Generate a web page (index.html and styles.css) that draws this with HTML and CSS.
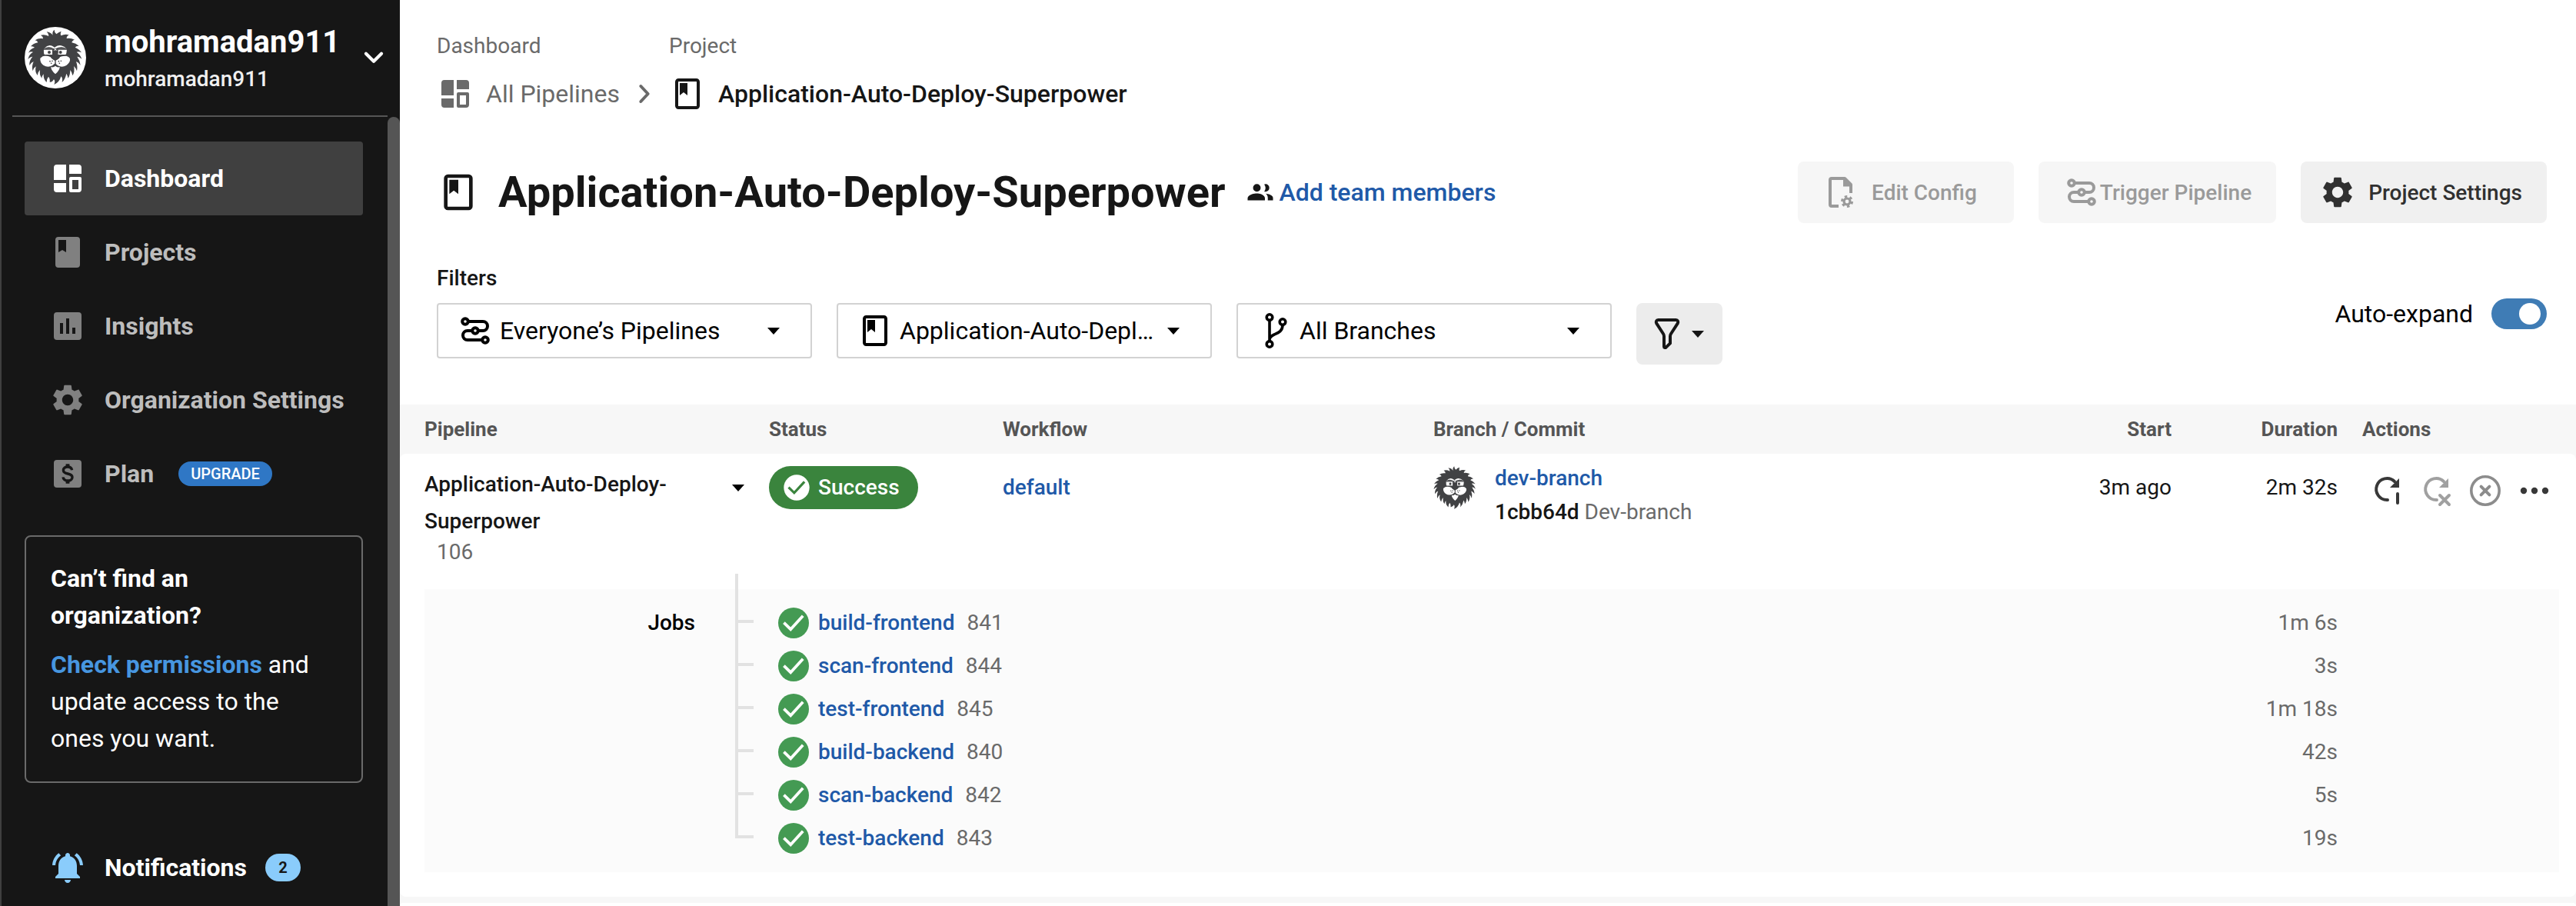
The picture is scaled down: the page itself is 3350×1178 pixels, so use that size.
FILE: index.html
```html
<!DOCTYPE html>
<html lang="en">
<head>
<meta charset="utf-8">
<title>Application-Auto-Deploy-Superpower - Pipelines</title>
<link rel="stylesheet" href="styles.css">
</head>
<body>
<svg class="sprite" aria-hidden="true">
  <symbol id="i-dashboard" viewBox="0 0 24 24"><path fill="currentColor" fill-rule="evenodd" d="M5 3h6v10H3V5a2 2 0 0 1 2-2zM13 3h6a2 2 0 0 1 2 2v4h-8zM3 15h8v6H5a2 2 0 0 1-2-2zM14 11h6a1 1 0 0 1 1 1v7a2 2 0 0 1-2 2h-5a1 1 0 0 1-1-1v-8a1 1 0 0 1 1-1zm1 2v6h4v-6z"/></symbol>
  <symbol id="i-book-solid" viewBox="0 0 24 24"><path fill="currentColor" d="M18 2H6a2 2 0 0 0-2 2v16a2 2 0 0 0 2 2h12a2 2 0 0 0 2-2V4a2 2 0 0 0-2-2zM6 4h5v8l-2.500-1.500L6 12z"/></symbol>
  <symbol id="i-book" viewBox="0 0 24 24"><rect x="5" y="3" width="14" height="18" rx="1.200" fill="none" stroke="currentColor" stroke-width="2"/><path fill="currentColor" d="M7 5h5v8l-2.500-2L7 13z"/></symbol>
  <symbol id="i-chart" viewBox="0 0 24 24"><path fill="currentColor" d="M19 3H5a2 2 0 0 0-2 2v14a2 2 0 0 0 2 2h14a2 2 0 0 0 2-2V5a2 2 0 0 0-2-2zM9 17H7v-7h2zm4 0h-2V7h2zm4 0h-2v-4h2z"/></symbol>
  <symbol id="i-gear" viewBox="0 0 24 24"><path fill="currentColor" d="M19.140 12.940c.04-.3.06-.61.06-.94 0-.32-.02-.64-.07-.94l2.030-1.580c.18-.14.23-.41.12-.61l-1.920-3.320c-.12-.22-.37-.29-.59-.22l-2.390.96c-.5-.38-1.030-.7-1.620-.94l-.36-2.540c-.04-.24-.24-.41-.48-.41h-3.840c-.24 0-.43.17-.47.41l-.36 2.540c-.59.24-1.130.57-1.620.94l-2.390-.96c-.22-.08-.47 0-.59.22L2.740 8.870c-.12.21-.08.47.12.61l2.030 1.580c-.05.3-.09.63-.09.94s.02.64.07.94l-2.030 1.580c-.18.14-.23.41-.12.61l1.920 3.320c.12.22.37.29.59.22l2.390-.96c.5.38 1.030.7 1.620.94l.36 2.540c.05.24.24.41.48.41h3.840c.24 0 .44-.17.47-.41l.36-2.540c.59-.24 1.130-.56 1.620-.94l2.390.96c.22.08.47 0 .59-.22l1.920-3.320c.12-.22.07-.47-.12-.61zM12 15.600c-1.980 0-3.600-1.620-3.600-3.600s1.620-3.600 3.600-3.600 3.600 1.620 3.600 3.600-1.620 3.600-3.600 3.600z"/></symbol>
  <symbol id="i-plan" viewBox="0 0 24 24"><path fill="currentColor" d="M19 3H5a2 2 0 0 0-2 2v14a2 2 0 0 0 2 2h14a2 2 0 0 0 2-2V5a2 2 0 0 0-2-2z"/><path fill="none" stroke="#161616" stroke-width="1.700" d="M14.800 9.600c-.2-1.300-1.300-2.100-2.800-2.100-1.600 0-2.800.8-2.800 2.200 0 3.200 5.800 1.400 5.800 4.500 0 1.500-1.300 2.300-2.900 2.300s-2.900-.8-3.100-2.300"/><path fill="#161616" d="M10.800 5.600h2.400v2.200h-2.400zM10.800 16.200h2.400v2.200h-2.400z"/></symbol>
  <symbol id="i-bell" viewBox="0 0 24 24"><path fill="currentColor" d="M7.580 4.080L6.150 2.650C3.750 4.480 2.170 7.300 2.030 10.500h2c.15-2.650 1.510-4.970 3.550-6.420zm12.390 6.420h2c-.15-3.200-1.730-6.020-4.120-7.850l-1.420 1.430c2.020 1.450 3.390 3.770 3.540 6.420zM18 11c0-3.070-1.640-5.640-4.500-6.320V4c0-.83-.67-1.500-1.500-1.500s-1.500.67-1.500 1.500v.68C7.630 5.360 6 7.920 6 11v5l-2 2v1h16v-1l-2-2zm-6 11c1.100 0 2-.9 2-2h-4c0 1.100.9 2 2 2z"/></symbol>
  <symbol id="i-down" viewBox="0 0 24 24"><path fill="none" stroke="currentColor" stroke-width="2.800" stroke-linecap="round" stroke-linejoin="round" d="M5.300 8.500l6.700 6.700 6.700-6.700"/></symbol>
  <symbol id="i-right" viewBox="0 0 24 24"><path fill="none" stroke="currentColor" stroke-width="3" stroke-linejoin="round" stroke-linecap="round" d="M8.500 4.500L15.500 12l-7 7.500"/></symbol>
  <symbol id="i-people" viewBox="0 0 24 24"><path fill="currentColor" d="M16.500 11.500a3.300 3.300 0 1 0 0-6.600 3.300 3.300 0 0 0-1.100.2 5.300 5.300 0 0 1 0 6.200c.3.100.7.200 1.100.2zM9 11.500a3.300 3.300 0 1 0 0-6.600 3.300 3.300 0 0 0 0 6.600zM9 13c-2.700 0-8 1.300-8 4.200V19h15v-1.800C16 14.300 11.700 13 9 13zM16.700 13.100c1 .8 1.800 2 1.800 3.900v2H23v-2c0-2.400-3.500-3.600-6.300-3.900z"/></symbol>
  <symbol id="i-pipeline" viewBox="0 0 24 24"><g fill="none" stroke="currentColor" stroke-width="2"><path d="M7.500 6H17a3 3 0 0 1 0 6h-2.500M9.500 12H7a3 3 0 0 0 0 6h9.500"/><circle cx="5.500" cy="6" r="1.900"/><circle cx="12" cy="12" r="1.900"/><circle cx="18.500" cy="18" r="1.900"/></g></symbol>
  <symbol id="i-branch" viewBox="0 0 24 24"><g fill="none" stroke="currentColor" stroke-width="1.800"><circle cx="8.500" cy="3.300" r="1.900"/><circle cx="8.500" cy="20.700" r="1.900"/><circle cx="17" cy="6.300" r="1.900"/><path d="M8.500 5.200v13.600M17 8.200c0 4-2.500 5-5.500 6.300-1.800.8-3 1.500-3 3.500"/></g></symbol>
  <symbol id="i-funnel" viewBox="0 0 24 24"><path fill="none" stroke="currentColor" stroke-width="2" stroke-linejoin="round" d="M6.200 3h11.600c1.200 0 1.600 1.200 1.100 2.200L14.500 12c-.4.6-.5 1-.5 1.700v4.500l-2.700 2.600c-.6.5-1.300.2-1.300-.6v-6.500c0-.7-.1-1.100-.5-1.700L5.100 5.200C4.600 4.200 5 3 6.200 3z"/></symbol>
  <symbol id="i-config" viewBox="0 0 24 24"><path fill="none" stroke="currentColor" stroke-width="2" stroke-linejoin="round" d="M10.500 21H6a1 1 0 0 1-1-1V4a1 1 0 0 1 1-1h8.500L18.500 7v5.500"/><path fill="currentColor" d="M13.500 3v5.200h5.500L15 3z"/><circle cx="16" cy="18" r="2" fill="none" stroke="currentColor" stroke-width="1.600"/><circle cx="16" cy="18" r="3.300" fill="none" stroke="currentColor" stroke-width="1.400" stroke-dasharray="1.730 1.730"/></symbol>
  <symbol id="i-check-circle" viewBox="0 0 24 24"><circle cx="12" cy="12" r="10" fill="currentColor"/><path fill="none" stroke="var(--tick)" stroke-width="1.900" d="M5.700 11.800l4.400 4.300 8-8.700"/></symbol>
  <symbol id="i-rerun" viewBox="0 0 24 24"><path fill="none" stroke="currentColor" stroke-width="2" stroke-linecap="round" d="M17 6a7 7 0 1 0-4.500 12M19 14v6"/><path fill="currentColor" d="M20 4v6h-6z"/></symbol>
  <symbol id="i-rerun-failed" viewBox="0 0 24 24"><path fill="none" stroke="currentColor" stroke-width="2" stroke-linecap="round" d="M17 6a7 7 0 1 0-4.500 12M14.500 15l6 6M20.500 15l-6 6"/><path fill="currentColor" d="M20 4v6h-6z"/></symbol>
  <symbol id="i-cancel" viewBox="0 0 24 24"><circle cx="12" cy="12" r="9.100" fill="none" stroke="currentColor" stroke-width="1.800"/><path fill="none" stroke="currentColor" stroke-width="2" stroke-linecap="round" d="M9.300 9.300l5.400 5.400M14.700 9.300l-5.400 5.400"/></symbol>
  <symbol id="i-more" viewBox="0 0 24 24"><g fill="currentColor"><circle cx="5" cy="12" r="2.100"/><circle cx="12" cy="12" r="2.100"/><circle cx="19" cy="12" r="2.100"/></g></symbol>
  <symbol id="i-caret" viewBox="0 0 16 9"><path fill="currentColor" d="M0 0h16L8 9z"/></symbol>
  <g id="lion">
    <path fill="#414244" d="M128 50Q124 38 134 29Q134 40 142 46Q150 38 161 35Q156 46 160 52Q175 44 191 49Q181 55 182 63Q198 60 213 68Q203 71 202 79Q218 81 230 92Q219 91 215 98Q231 104 240 118Q228 112 221 116Q235 126 241 143Q230 133 223 134Q234 149 236 167Q227 155 219 153Q226 172 222 190Q217 177 210 171Q215 192 205 208Q203 194 196 186Q196 208 187 218Q186 208 181 200Q177 222 164 234Q168 218 160 211Q154 234 133 243Q139 230 132 222Q127 234 116 233Q118 220 111 212Q103 222 104 234Q90 222 92 202Q86 208 85 218Q75 206 78 186Q70 193 68 207Q57 193 62 172Q54 177 50 190Q44 173 53 153Q44 156 37 168Q35 149 49 134Q39 134 31 145Q34 126 51 116Q42 113 33 119Q39 104 57 98Q51 92 42 94Q52 82 70 79Q68 72 59 70Q72 61 90 64Q90 55 81 50Q97 46 112 54Q111 43 104 37Q120 39 128 50Z"/>
    <g fill="#fff"><path d="M95 101Q113 82 132 96L135 99L138 96Q157 82 180 101Q160 91 138 103H132Q114 91 95 101Z"/><rect x="92" y="103" width="37" height="25" rx="4"/><rect x="146" y="103" width="37" height="25" rx="4"/><path d="M79 140Q92 126 110 132Q121 134 128 143L136 150L146 143Q156 132 170 132Q188 129 195 142Q197 156 181 168Q164 178 148 169L137 160L126 169Q108 178 91 167Q77 156 79 140Z"/><path d="M121 174Q129 178 138 170Q146 178 155 174Q156 186 138 202Q120 186 121 174Z"/><path d="M130 111h15l-7-8z"/></g>
    <path fill="none" stroke="#414244" stroke-width="4" d="M90 105h38v23H97q-5 0-6-8zM147 105h38l-2 15q-1 8-6 8h-30z"/>
    <g fill="#414244"><circle cx="114" cy="117" r="6"/><circle cx="158" cy="117" r="6"/><path d="M128 112q10-6 20 0v8q-10-5-20 0zM119 134h37q-2 9-18 15-16-6-19-15z"/><circle cx="117" cy="152" r="2.500"/><circle cx="126" cy="151" r="2.500"/><circle cx="122" cy="160" r="2.500"/><circle cx="151" cy="152" r="2.500"/><circle cx="160" cy="151" r="2.500"/><circle cx="154" cy="160" r="2.500"/><path d="M136 146h4v20h-4z"/></g>
  </g>
</svg>
<div class="app">
  <aside class="sidebar">
    <button class="org" type="button">
      <span class="org-avatar"><svg viewBox="18 18 240 240"><use href="#lion"/></svg></span>
      <span class="org-names"><span class="org-name">mohramadan911</span><span class="org-sub">mohramadan911</span></span>
      <svg class="icon-36"><use href="#i-down"/></svg>
    </button>
    <div class="sidebar-body">
      <div class="sidebar-content">
        <nav class="nav">
          <a class="nav-item active" href="#dashboard"><svg class="icon"><use href="#i-dashboard"/></svg>Dashboard</a>
          <a class="nav-item" href="#projects"><svg class="icon"><use href="#i-book-solid"/></svg>Projects</a>
          <a class="nav-item" href="#insights"><svg class="icon"><use href="#i-chart"/></svg>Insights</a>
          <a class="nav-item" href="#settings"><svg class="icon"><use href="#i-gear"/></svg>Organization Settings</a>
          <a class="nav-item" href="#plan"><svg class="icon"><use href="#i-plan"/></svg>Plan<span class="upgrade">UPGRADE</span></a>
        </nav>
        <section class="org-help">
          <h2>Can’t find an organization?</h2>
          <p><a href="#permissions">Check permissions</a> and update access to the ones you want.</p>
        </section>
        <a class="nav-item notifications" href="#notifications"><svg class="icon"><use href="#i-bell"/></svg>Notifications<span class="count">2</span></a>
      </div>
      <div class="scroll-thumb"></div>
    </div>
  </aside>
  <main class="main">
    <header class="top">
      <ol class="crumbs">
        <li class="crumb"><span class="crumb-label">Dashboard</span><a class="crumb-link" href="#all"><svg class="icon"><use href="#i-dashboard"/></svg>All Pipelines</a></li>
        <li class="crumb-sep"><svg><use href="#i-right"/></svg></li>
        <li class="crumb"><span class="crumb-label">Project</span><a class="crumb-link current" href="#project"><svg class="icon"><use href="#i-book"/></svg>Application-Auto-Deploy-Superpower</a></li>
      </ol>
      <div class="title-row">
        <svg class="title-icon"><use href="#i-book"/></svg>
        <h1>Application-Auto-Deploy-Superpower</h1>
        <a class="team-link" href="#team"><svg class="icon-36"><use href="#i-people"/></svg>Add team members</a>
        <div class="title-actions">
          <button class="btn btn-config" type="button" disabled><svg class="icon"><use href="#i-config"/></svg>Edit Config</button>
          <button class="btn btn-trigger" type="button" disabled><svg class="icon"><use href="#i-pipeline"/></svg>Trigger Pipeline</button>
          <button class="btn btn-settings" type="button"><svg class="icon"><use href="#i-gear"/></svg>Project Settings</button>
        </div>
      </div>
      <div class="filters">
        <div class="filter-group">
          <span class="filters-label">Filters</span>
          <div class="filter-row">
            <label class="picker"><svg class="icon"><use href="#i-pipeline"/></svg><select aria-label="Pipelines"><option>Everyone’s Pipelines</option></select><svg class="caret"><use href="#i-caret"/></svg></label>
            <label class="picker"><svg class="icon"><use href="#i-book"/></svg><select aria-label="Project"><option>Application-Auto-Deploy-Superpower</option></select><svg class="caret"><use href="#i-caret"/></svg></label>
            <label class="picker"><svg class="icon"><use href="#i-branch"/></svg><select aria-label="Branch"><option>All Branches</option></select><svg class="caret"><use href="#i-caret"/></svg></label>
            <button class="filter-btn" type="button" aria-label="Status filter"><svg class="icon"><use href="#i-funnel"/></svg><svg class="caret"><use href="#i-caret"/></svg></button>
          </div>
        </div>
        <label class="auto-expand">Auto-expand<input type="checkbox" class="toggle" checked></label>
      </div>
    </header>
    <section class="pipelines">
      <table class="runs">
        <colgroup><col class="c-pipeline"><col class="c-status"><col class="c-workflow"><col><col class="c-start"><col class="c-duration"><col class="c-actions"></colgroup>
        <thead>
          <tr><th class="first">Pipeline</th><th>Status</th><th>Workflow</th><th>Branch / Commit</th><th class="num">Start</th><th class="num">Duration</th><th class="last">Actions</th></tr>
        </thead>
        <tbody>
          <tr class="run">
            <td class="first">
              <div class="run-name">
                <div><a href="#project">Application-Auto-Deploy-Superpower</a><span class="run-number">106</span></div>
                <button class="plain expander" type="button" aria-label="Collapse"><svg class="caret"><use href="#i-caret"/></svg></button>
              </div>
            </td>
            <td><span class="status"><svg><use href="#i-check-circle"/></svg>Success</span></td>
            <td><a class="link" href="#default">default</a></td>
            <td>
              <div class="commit">
                <svg class="commit-avatar" viewBox="29 28 216 216"><use href="#lion"/></svg>
                <div class="commit-lines"><a class="link" href="#dev-branch">dev-branch</a><span><a class="hash" href="#1cbb64d">1cbb64d</a> <span class="muted">Dev-branch</span></span></div>
              </div>
            </td>
            <td class="num">3m ago</td>
            <td class="num">2m 32s</td>
            <td class="last">
              <div class="actions">
                <button class="plain" type="button" aria-label="Rerun"><svg class="icon"><use href="#i-rerun"/></svg></button>
                <button class="plain off" type="button" aria-label="Rerun from failed"><svg class="icon"><use href="#i-rerun-failed"/></svg></button>
                <button class="plain cancel" type="button" aria-label="Cancel"><svg class="icon"><use href="#i-cancel"/></svg></button>
                <button class="plain" type="button" aria-label="More"><svg class="icon"><use href="#i-more"/></svg></button>
              </div>
            </td>
          </tr>
          <tr class="jobs-row">
            <td colspan="7">
              <div class="jobs">
                <span class="jobs-label">Jobs</span>
                <ul class="job-list">
                  <li><svg class="icon"><use href="#i-check-circle"/></svg><a class="link" href="#841">build-frontend</a><span>841</span><span class="time">1m 6s</span></li>
                  <li><svg class="icon"><use href="#i-check-circle"/></svg><a class="link" href="#844">scan-frontend</a><span>844</span><span class="time">3s</span></li>
                  <li><svg class="icon"><use href="#i-check-circle"/></svg><a class="link" href="#845">test-frontend</a><span>845</span><span class="time">1m 18s</span></li>
                  <li><svg class="icon"><use href="#i-check-circle"/></svg><a class="link" href="#840">build-backend</a><span>840</span><span class="time">42s</span></li>
                  <li><svg class="icon"><use href="#i-check-circle"/></svg><a class="link" href="#842">scan-backend</a><span>842</span><span class="time">5s</span></li>
                  <li><svg class="icon"><use href="#i-check-circle"/></svg><a class="link" href="#843">test-backend</a><span>843</span><span class="time">19s</span></li>
                </ul>
              </div>
            </td>
          </tr>
        </tbody>
      </table>
      <div class="next-run"></div>
    </section>
  </main>
</div>
</body>
</html>
```
FILE: styles.css
```css
*, *::before, *::after { box-sizing: border-box; }

body {
  margin: 0;
  font-family: Roboto, "Liberation Sans", sans-serif;
  font-size: 28px;
  color: #161616;
  background: #fff;
}

a { color: inherit; text-decoration: none; }
button, select { font: inherit; color: inherit; }
h1, h2, p, ol, ul { margin: 0; padding: 0; }
ol, ul { list-style: none; }
svg { display: block; flex: none; }

.sprite { position: absolute; width: 0; height: 0; }
.icon { width: 48px; height: 48px; }
.icon-36 { width: 36px; height: 36px; }
.caret { width: 16px; height: 9px; }
.link { color: #2059a8; font-weight: 500; }
.muted { color: #6a6a6a; }
.plain { display: block; padding: 0; border: 0; background: none; cursor: pointer; }

.app { display: flex; height: 100vh; overflow: hidden; }

/* Sidebar */
.sidebar {
  display: flex;
  flex-direction: column;
  flex: none;
  width: 520px;
  border-left: 2px solid #404040;
  background: #161616;
  color: #fff;
}
.org {
  display: flex;
  align-items: center;
  flex: none;
  height: 152px;
  margin: 0 16px 0 14px;
  padding: 0 0 0 16px;
  border: 0;
  border-bottom: 2px solid #555;
  background: none;
  text-align: left;
}
.org-avatar { width: 80px; height: 80px; border-radius: 50%; background: #fff; overflow: hidden; }
.org-avatar svg { width: 80px; height: 80px; }
.org-names { display: flex; flex-direction: column; flex: 1; gap: 4px; margin-left: 24px; padding-top: 4px; }
.org-name { font-size: 40px; line-height: 48px; font-weight: 700; }
.org-sub { font-size: 28px; line-height: 40px; font-weight: 500; color: #f0f0f0; }

.sidebar-body { display: flex; flex: 1; min-height: 0; }
.sidebar-content { flex: 1; padding: 32px 32px 0 30px; }
.scroll-thumb { width: 16px; border-radius: 8px 8px 0 0; background: #555; }

.nav-item {
  display: flex;
  align-items: center;
  gap: 24px;
  height: 96px;
  padding-left: 32px;
  border-radius: 4px;
  font-size: 32px;
  font-weight: 700;
  white-space: nowrap;
  color: #bdbdbd;
}
.nav-item .icon { color: #808080; }
.nav-item.active { background: #404040; color: #fff; }
.nav-item.active .icon { color: #fff; }
.upgrade {
  margin-left: 8px;
  padding: 0 16px;
  border-radius: 16px;
  background: #2f77c5;
  color: #fff;
  font-size: 20px;
  line-height: 32px;
  font-weight: 500;
}
.org-help {
  margin: 32px 0 62px;
  padding: 30px 32px 32px;
  border: 2px solid #6a6a6a;
  border-radius: 8px;
  font-size: 32px;
  line-height: 48px;
}
.org-help h2 { margin-bottom: 16px; font-size: 32px; line-height: 48px; font-weight: 700; }
.org-help a { color: #4796e0; font-weight: 700; }
.notifications { color: #fff; }
.notifications .icon { color: #8accfb; }
.count {
  width: 46px;
  border-radius: 18px;
  background: #8accfb;
  color: #161616;
  font-size: 20px;
  line-height: 36px;
  text-align: center;
}

/* Page header */
.main { display: flex; flex-direction: column; flex: 1; min-width: 0; }
.top { flex: none; padding: 40px 38px 52px 48px; }
.crumbs { display: flex; align-items: flex-end; gap: 16px; }
.crumb-label { display: block; margin-bottom: 18px; line-height: 40px; color: #6a6a6a; }
.crumb-link { display: flex; align-items: center; gap: 16px; font-size: 32px; color: #6a6a6a; }
.crumb-link.current { font-weight: 500; color: #161616; }
.crumb-sep { padding: 8px 0; color: #6a6a6a; }
.crumb-sep svg { width: 32px; height: 32px; }

.title-row { display: flex; align-items: center; margin-top: 64px; }
.title-icon { width: 56px; height: 56px; margin-right: 24px; }
h1 { font-size: 56px; line-height: 80px; font-weight: 700; white-space: nowrap; }
.team-link {
  display: flex;
  align-items: center;
  gap: 6px;
  margin-left: 28px;
  font-size: 32px;
  font-weight: 500;
  color: #2059a8;
}
.team-link svg { color: #161616; }
.title-actions { display: flex; gap: 32px; margin-left: auto; }
.btn {
  display: flex;
  align-items: center;
  gap: 16px;
  height: 80px;
  padding: 0 32px;
  border: 0;
  border-radius: 8px;
  background: #f0f0f0;
  font-weight: 500;
  color: #303030;
}
.btn:disabled { background: #f6f6f6; color: #9a9a9a; }
.btn-config { padding-right: 48px; }
.btn-trigger { gap: 0; }
.btn-settings { padding-left: 24px; }

.filters { display: flex; align-items: center; justify-content: space-between; margin-top: 52px; }
.filters-label { display: block; margin-bottom: 12px; line-height: 40px; font-weight: 500; }
.filter-row { display: flex; align-items: flex-start; gap: 32px; }
.picker {
  display: flex;
  align-items: center;
  gap: 8px;
  width: 488px;
  height: 72px;
  padding: 0 40px 0 24px;
  border: 2px solid #d2d2d2;
  border-radius: 4px;
  font-size: 32px;
  color: #000;
}
.picker select {
  flex: 1;
  min-width: 0;
  height: 48px;
  margin-right: 8px;
  padding: 0;
  border: 0;
  background: none;
  appearance: none;
  text-overflow: ellipsis;
}
.filter-btn {
  display: flex;
  align-items: center;
  gap: 8px;
  width: 112px;
  height: 80px;
  padding: 0 16px;
  border: 0;
  border-radius: 8px;
  background: #ececec;
}
.auto-expand { display: flex; align-items: center; gap: 24px; font-size: 32px; color: #000; }
.toggle {
  width: 72px;
  height: 40px;
  margin: 0;
  padding: 6px 8px;
  border-radius: 20px;
  background: #3f7cb5;
  appearance: none;
}
.toggle::before {
  content: "";
  display: block;
  width: 28px;
  height: 28px;
  margin-left: auto;
  border-radius: 50%;
  background: #fff;
}

/* Pipeline runs */
.pipelines { display: flex; flex-direction: column; flex: 1; gap: 8px; min-height: 0; background: #f7f7f7; }
.runs { width: 100%; border-spacing: 0; table-layout: fixed; }
.c-pipeline { width: 480px; }
.c-status { width: 304px; }
.c-workflow { width: 560px; }
.c-start { width: 280px; }
.c-duration { width: 216px; }
.c-actions { width: 310px; }
.runs th {
  height: 64px;
  padding: 0;
  font-size: 26px;
  font-weight: 700;
  text-align: left;
  color: #555;
}
.runs td { padding: 0; background: #fff; }
.runs .num { text-align: right; }
.runs .first, .runs .last { padding-left: 32px; }
.run td { padding-top: 16px; padding-bottom: 32px; line-height: 56px; vertical-align: top; }
.run td:first-child { border-top-left-radius: 8px; }
.run td:last-child { border-top-right-radius: 8px; }
.run-name { display: flex; justify-content: space-between; padding-right: 32px; line-height: 48px; font-weight: 500; }
.run-name > div { width: 344px; }
.run-number { display: block; padding-left: 16px; line-height: 32px; font-weight: 400; color: #6a6a6a; }
.expander { height: 56px; color: #000; }
.status {
  --tick: #3a843d;
  display: inline-flex;
  align-items: center;
  gap: 8px;
  height: 56px;
  padding: 0 24px 0 16px;
  border-radius: 28px;
  background: #3a843d;
  color: #fff;
  font-weight: 500;
  vertical-align: top;
}
.status svg { width: 40px; height: 40px; }
.commit { display: flex; gap: 24px; }
.commit-avatar { width: 56px; height: 56px; }
.commit-lines { display: flex; flex-direction: column; gap: 12px; line-height: 32px; }
.hash { font-weight: 500; }
.actions { display: flex; gap: 16px; padding: 8px 0 0 8px; color: #383838; }
.actions .off { color: #a0a0a0; }
.actions .cancel { color: #8c8c8c; }

.runs .jobs-row td { padding: 0 22px 32px 32px; border-radius: 0 0 8px 8px; }
.jobs { display: flex; padding: 16px 0; line-height: 56px; background: #fbfbfb; }
.jobs-label { width: 352px; margin-right: 52px; text-align: right; font-weight: 500; color: #000; }
.job-list { position: relative; flex: 1; color: #6a6a6a; }
.job-list::before {
  content: "";
  position: absolute;
  top: -36px;
  bottom: 28px;
  left: 0;
  width: 4px;
  background: #e2e2e2;
}
.job-list li { --tick: #fff; position: relative; display: flex; align-items: center; height: 56px; padding: 0 288px 0 52px; }
.job-list li::before {
  content: "";
  position: absolute;
  top: 24px;
  left: 4px;
  width: 20px;
  height: 4px;
  background: #e2e2e2;
}
.job-list .icon { margin-right: 8px; color: #449a53; }
.job-list .link { margin-right: 16px; }
.time { margin-left: auto; }
.next-run { flex: 1; border-radius: 8px 8px 0 0; background: #fff; }
```
